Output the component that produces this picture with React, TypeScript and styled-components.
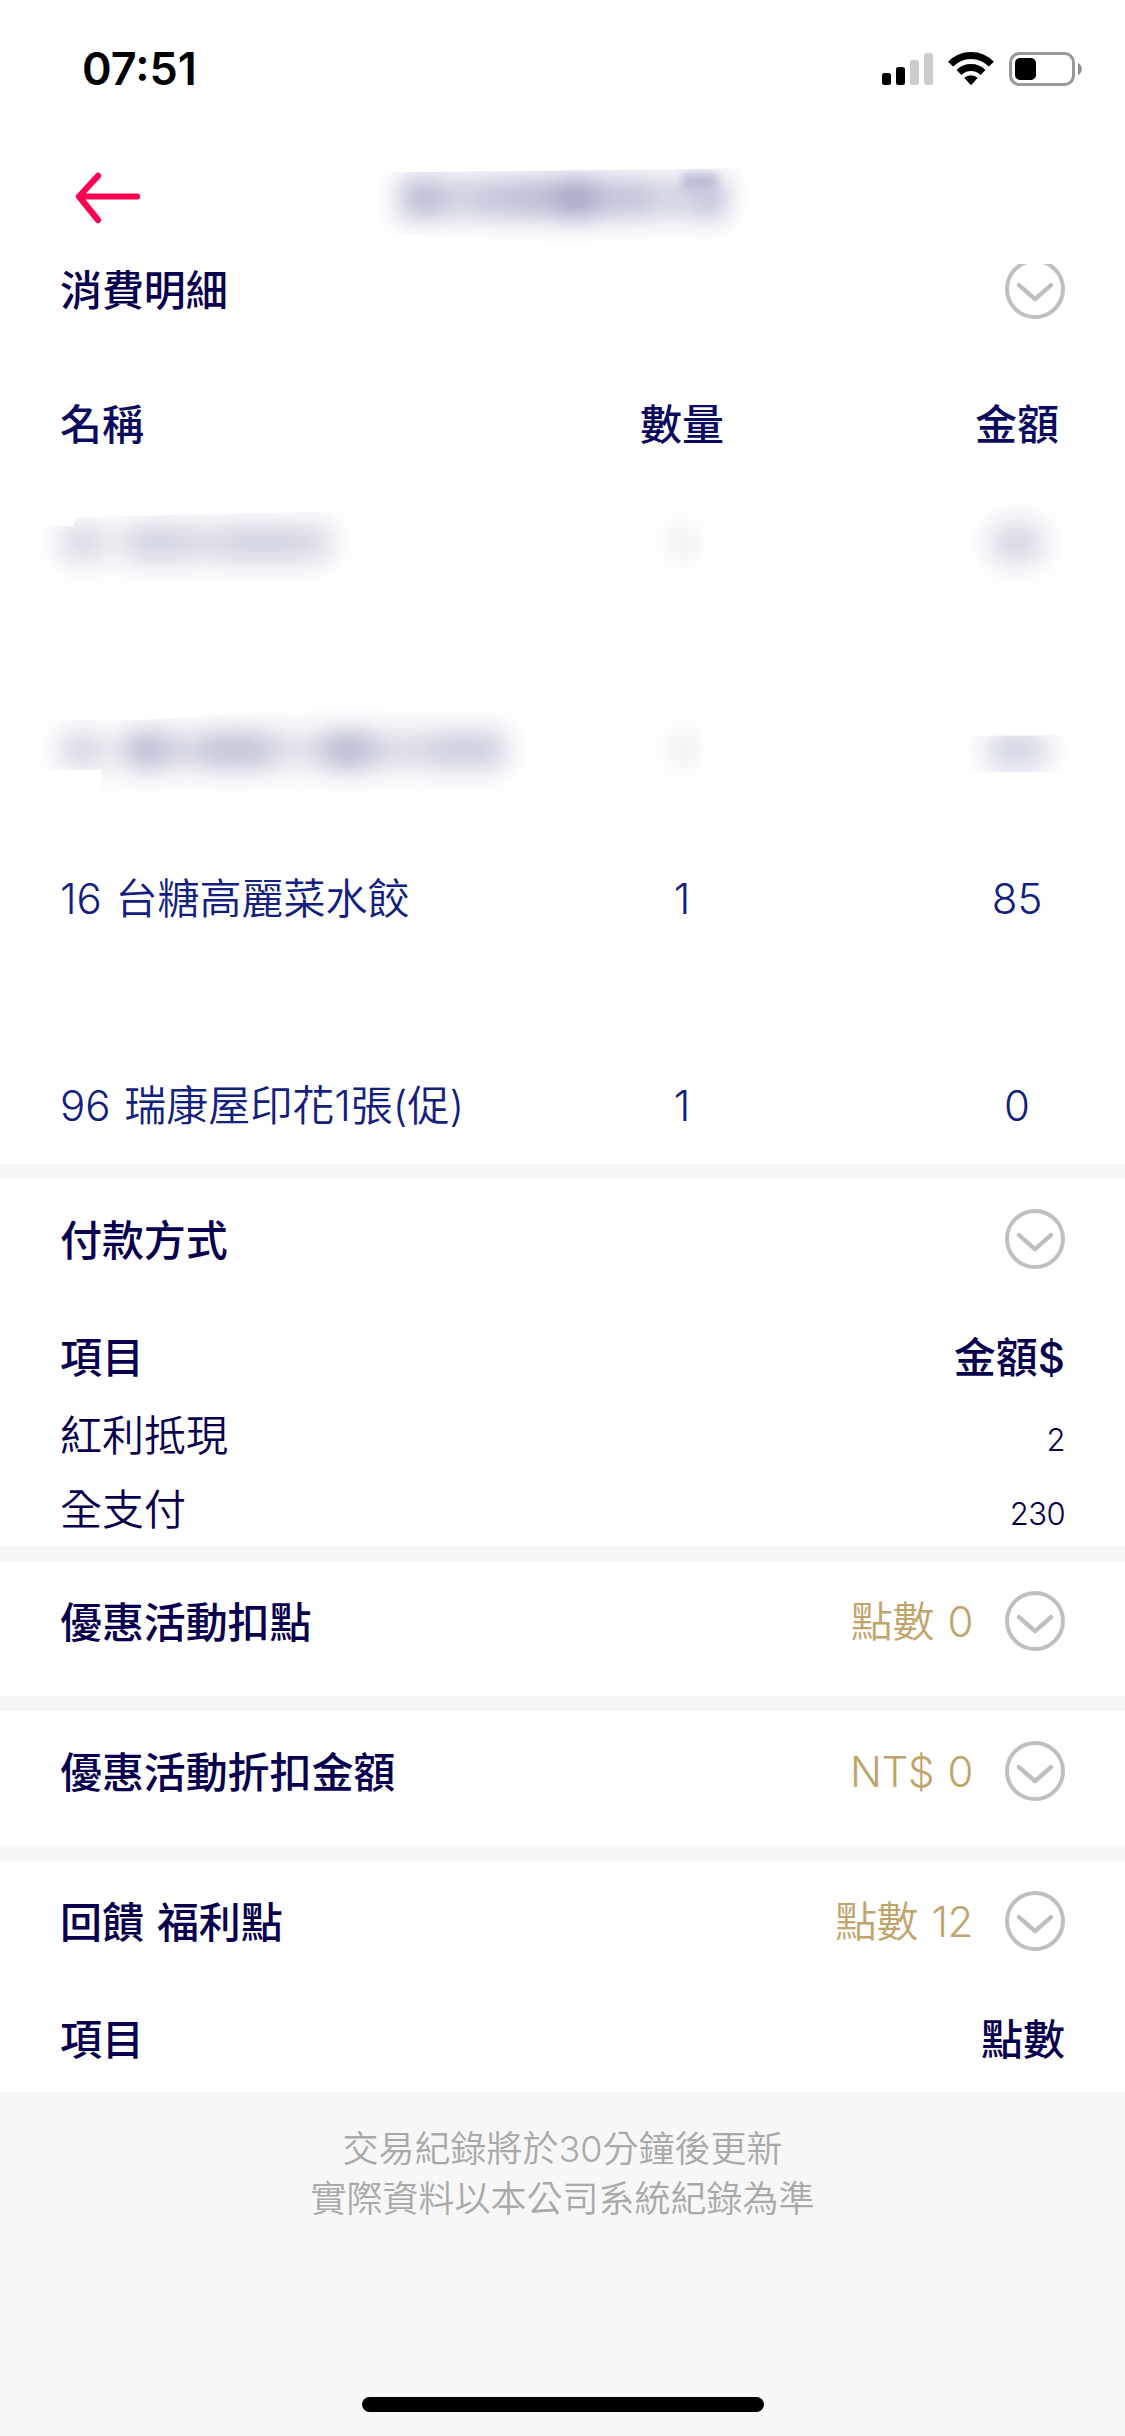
import React from "react";
import styled, { createGlobalStyle } from "styled-components";

const GlobalStyle = createGlobalStyle`
  * { box-sizing: border-box; }
  body {
    margin: 0;
    background: #f7f7f7;
    font-family: Inter, "Noto Sans CJK TC", sans-serif;
  }
`;

const Screen = styled.div`
  width: 1125px;
  height: 2436px;
  display: flex;
  flex-direction: column;
  overflow: hidden;
  background: #f7f7f7;
  color: #08004f;
  font-size: 42px;
`;

const StatusBar = styled.header`
  height: 132px;
  flex: none;
  display: flex;
  justify-content: space-between;
  align-items: flex-start;
  padding: 39px 42px 0 82px;
  background: #fff;
`;

const Clock = styled.div`
  font-size: 45px;
  font-weight: 600;
  line-height: 60px;
  color: #000;
`;

const StatusIcons = styled.svg`
  display: block;
  width: 202px;
  height: 36px;
  margin-top: 12px;
`;

const NavBar = styled.nav`
  height: 132px;
  flex: none;
  display: flex;
  align-items: flex-start;
  padding: 36px 0 0 73px;
  background: #fff;
`;

const BackArrow = styled.svg`
  display: block;
  width: 70px;
  height: 60px;
  margin-right: 232px;
`;

const List = styled.main`
  flex: none;
  display: flex;
  flex-direction: column;
  gap: 15px;
  overflow: hidden;
`;

const Section = styled.section<{ $height: number; $lead?: number }>`
  height: ${(p) => p.$height}px;
  padding-top: ${(p) => p.$lead ?? 30}px;
  background: #fff;
`;

const SectionHead = styled.div<{ $shift?: number }>`
  height: 60px;
  display: flex;
  align-items: center;
  padding: 0 60px;
  margin-top: ${(p) => p.$shift ?? 0}px;
`;

const Title = styled.h2`
  flex: 1;
  margin: 4px 0 0;
  font-size: 42px;
  font-weight: 500;
  line-height: 60px;
  letter-spacing: -0.1px;
  word-spacing: 2px;
`;

const Total = styled.span`
  margin: 2px 32px 0 0;
  font-weight: 350;
  line-height: 60px;
  letter-spacing: -0.4px;
  word-spacing: 2px;
  color: #c0a46b;
`;

const Toggle = styled.svg`
  display: block;
  width: 60px;
  height: 60px;
`;

const GoodsRow = styled.div<{ $gap: number; $head?: boolean }>`
  display: grid;
  grid-template-columns: 522px 335px 200px;
  align-items: center;
  height: 60px;
  line-height: 60px;
  margin-top: ${(p) => p.$gap}px;
  padding-left: 60px;
  font-weight: ${(p) => (p.$head ? 500 : 350)};
  color: ${(p) => (p.$head ? "#0b0b60" : "#12207f")};
  white-space: pre;
  word-spacing: 2px;
`;

const Quantity = styled.span`
  display: flex;
  justify-content: center;
  padding-right: 135px;
`;

const Amount = styled.span`
  display: flex;
  justify-content: center;
`;

const PayRow = styled.div<{ $gap: number; $head?: boolean }>`
  display: flex;
  justify-content: space-between;
  align-items: baseline;
  height: 72px;
  line-height: 72px;
  margin-top: ${(p) => p.$gap}px;
  padding: 0 60px;
  font-weight: ${(p) => (p.$head ? 500 : 350)};
`;

const SmallValue = styled.span`
  font-size: 31px;
  letter-spacing: -0.6px;
`;

const Footer = styled.footer`
  flex: 1;
  display: flex;
  flex-direction: column;
  align-items: center;
  justify-content: space-between;
  padding: 32px 0 24px;
`;

const Notice = styled.p`
  margin: 0;
  font-size: 36px;
  font-weight: 350;
  line-height: 50px;
  text-align: center;
  color: #a9a9a9;
`;

const HomeIndicator = styled.div`
  width: 402px;
  height: 15px;
  border-radius: 8px;
  background: #000;
`;

/* Hidden names and prices: a soft strip of ink blots, trimmed to a ragged edge. */
const Veil = styled.div<{ $clip: string; $left: number }>`
  display: flex;
  align-items: center;
  height: 120px;
  margin: -30px 0 -30px ${(p) => p.$left}px;
  padding: 0 40px;
  clip-path: ${(p) => p.$clip};
`;

const Ink = styled.div<{ $soft: number; $height: number }>`
  display: flex;
  height: ${(p) => p.$height}px;
  filter: blur(${(p) => p.$soft}px);
`;

const Blot = styled.i<{ $width: number; $color: string }>`
  width: ${(p) => p.$width}px;
  background: ${(p) => p.$color};
`;

const Corner = styled.i`
  width: 34px;
  height: 16px;
  margin: -32px 0 0 -44px;
  background: #bcbdd6;
  filter: blur(4px);
`;

type Stroke = [number, string];

function Hidden({ strokes, clip = "none", left = -39, soft = 14, height = 36, children }: {
  strokes: Stroke[];
  clip?: string;
  left?: number;
  soft?: number;
  height?: number;
  children?: React.ReactNode;
}) {
  return (
    <Veil $clip={clip} $left={left} aria-hidden="true">
      <Ink $soft={soft} $height={height}>
        {strokes.map(([width, color], i) => (
          <Blot key={i} $width={width} $color={color} />
        ))}
      </Ink>
      {children}
    </Veil>
  );
}

function ToggleIcon() {
  return (
    <Toggle viewBox="0 0 60 60" fill="none" stroke="#bfbfbf">
      <circle cx="30" cy="30" r="28" strokeWidth="4" />
      <path d="M14 26.2 30 40.2 46 26.2" strokeWidth="4.4" strokeLinecap="round" strokeLinejoin="round" />
    </Toggle>
  );
}

function Head({ title, total, shift }: { title: string; total?: string; shift?: number }) {
  return (
    <SectionHead $shift={shift}>
      <Title>{title}</Title>
      {total && <Total>{total}</Total>}
      <ToggleIcon />
    </SectionHead>
  );
}

export default function App() {
  return (
    <Screen>
      <GlobalStyle />
      <StatusBar>
        <Clock>07:51</Clock>
        <StatusIcons viewBox="0 0 202 36">
          <rect x="1" y="22" width="9" height="12" rx="2.5" />
          <rect x="15" y="16" width="9" height="18" rx="2.5" />
          <rect x="29" y="9" width="9" height="25" rx="2.5" fill="#ccc" />
          <rect x="43" y="2" width="9" height="32" rx="2.5" fill="#ccc" />
          <g fill="none" stroke="#000" strokeWidth="7">
            <path d="M69.6 13.2a28 28 0 0 1 40.8 0" />
            <path d="M78 21.4a17 17 0 0 1 24 0" />
          </g>
          <path d="M83.2 26.8a10 10 0 0 1 13.6 0L91 33.2a1.4 1.4 0 0 1-2 0z" />
          <rect x="129.5" y="2.5" width="63" height="31" rx="9" fill="none" stroke="#999" strokeWidth="3" />
          <rect x="134" y="7" width="21" height="22" rx="5" />
          <path d="M197 12c5 2 5 10 0 12z" fill="#8c8c8c" />
        </StatusIcons>
      </StatusBar>

      <NavBar>
        <BackArrow viewBox="0 0 70 60" fill="none" stroke="#ff0050" strokeWidth="6.2" strokeLinecap="round" strokeLinejoin="round">
          <path d="M64 28.5H6M25 7.8 6 28.5 25 52" />
        </BackArrow>
        <Hidden
          left={-15}
          soft={13}
          clip="polygon(0 35px, 55px 34px, 100% 30px, 100% 110px, 60% 108px, 0 94px)"
          height={42}
          strokes={[
            [42, "#bbbdd3"], [35, "#d0d2e0"], [35, "#c4c6da"], [45, "#bcbed4"],
            [38, "#a3a5c6"], [55, "#c2c4d8"], [50, "#d3d5e3"], [26, "#bcbed5"],
          ]}
        >
          <Corner />
        </Hidden>
      </NavBar>

      <List>
        <Section $height={900} $lead={0}>
          <Head title="消費明細" shift={-5} />
          <GoodsRow $gap={76} $head>
            <span>名稱</span>
            <Quantity>數量</Quantity>
            <Amount>金額</Amount>
          </GoodsRow>
          <GoodsRow $gap={58}>
            <Hidden
              clip="polygon(0 43px, 52px 43px, 56px 34px, 340px 28px, 100% 24px, 100% 100%, 0 100%)"
              strokes={[[40, "#d4d5e2"], [26, "#f0f0f4"], [60, "#cfd0e0"], [40, "#d9d9e5"], [70, "#cecfdf"], [34, "#d6d6e3"]]}
            />
            <Quantity><Hidden left={0} soft={14} height={32} strokes={[[13, "#dadae6"]]} /></Quantity>
            <Amount><Hidden left={0} soft={15} height={34} strokes={[[46, "#c9cadb"]]} /></Amount>
          </GoodsRow>
          <GoodsRow $gap={147}>
            <Hidden
              clip="polygon(0 30px, 120px 30px, 365px 15px, 365px 22px, 100% 22px, 100% 100%, 80px 100%, 80px 80px, 0 79px)"
              strokes={[
                [40, "#d2d3e1"], [26, "#f0f0f4"], [38, "#b2b4cc"], [37, "#d5d6e3"], [68, "#bcbed2"],
                [55, "#dedee9"], [46, "#b0b2ca"], [60, "#d8d8e5"], [74, "#c8cadb"],
              ]}
            />
            <Quantity><Hidden left={0} soft={14} height={32} strokes={[[13, "#dadae6"]]} /></Quantity>
            <Amount>
              <Hidden left={0} soft={14} clip="polygon(0 46px, 100% 45px, 100% 82px, 0 83px)" strokes={[[58, "#cfd1e1"]]} />
            </Amount>
          </GoodsRow>
          <GoodsRow $gap={89}>
            <span>16 台糖高麗菜水餃</span>
            <Quantity>1</Quantity>
            <Amount>85</Amount>
          </GoodsRow>
          <GoodsRow $gap={147}>
            <span>96 瑞康屋印花1張(促)</span>
            <Quantity>1</Quantity>
            <Amount>0</Amount>
          </GoodsRow>
        </Section>

        <Section $height={367}>
          <Head title="付款方式" />
          <PayRow $gap={53} $head><span>項目</span><span>金額$</span></PayRow>
          <PayRow $gap={6}><span>紅利抵現</span><SmallValue>2</SmallValue></PayRow>
          <PayRow $gap={2}><span>全支付</span><SmallValue>230</SmallValue></PayRow>
        </Section>

        <Section $height={135}>
          <Head title="優惠活動扣點" total="點數 0" />
        </Section>

        <Section $height={135}>
          <Head title="優惠活動折扣金額" total="NT$ 0" />
        </Section>

        <Section $height={231}>
          <Head title="回饋 福利點" total="點數 12" />
          <PayRow $gap={53} $head><span>項目</span><span>點數</span></PayRow>
        </Section>
      </List>

      <Footer>
        <Notice>
          交易紀錄將於30分鐘後更新
          <br />
          實際資料以本公司系統紀錄為準
        </Notice>
        <HomeIndicator />
      </Footer>
    </Screen>
  );
}
